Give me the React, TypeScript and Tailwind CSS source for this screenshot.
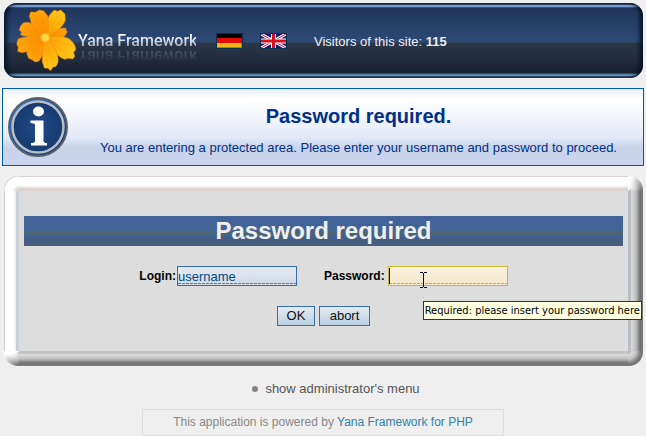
import React from 'react';

const Flower = () => (
  <svg viewBox="10 9 186 189" className="h-[63px] w-[62px] shrink-0" aria-hidden="true">
    <defs>
      <radialGradient id="petal" gradientUnits="userSpaceOnUse" cx="101" cy="95" r="98">
        <stop offset="0" stopColor="#f98c04" />
        <stop offset="0.55" stopColor="#fd9a06" />
        <stop offset="1" stopColor="#ffab12" />
      </radialGradient>
      <radialGradient id="petalLight" gradientUnits="userSpaceOnUse" cx="101" cy="95" r="98">
        <stop offset="0" stopColor="#fc9b08" />
        <stop offset="0.6" stopColor="#feb60c" />
        <stop offset="1" stopColor="#ffc61c" />
      </radialGradient>
    </defs>
    <g stroke="#ea8a04" strokeWidth="1.5" strokeLinejoin="round">
      <path fill="url(#petal)" d="M101 95C115 80 132 66 150 67L162 66L163 73L167 77L159 90C150 100 128 104 101 95Z" />
      <path fill="url(#petalLight)" d="M101 95C100 65 105 36 118 22L128 12L137 16L147 12L153 18L160 24L161 42C158 56 140 76 101 95Z" />
      <path fill="url(#petalLight)" d="M101 95C125 88 160 90 174 100C186 110 193 122 192 132L186 138L189 152L183 159L170 157L160 160C140 154 120 132 101 95Z" />
      <path fill="url(#petal)" d="M101 95C76 98 42 93 27 86L30 78L23 73L26 61L35 51L48 49C70 54 91 73 101 95Z" />
      <path fill="url(#petal)" d="M101 95C82 116 66 136 44 137L31 140L18 136L20 124L15 114L20 98C45 90 76 90 101 95Z" />
      <path fill="url(#petal)" d="M101 95C102 122 94 150 81 166L70 168L61 161L51 157L45 142C48 126 72 106 101 95Z" />
      <path fill="url(#petalLight)" d="M101 95C124 111 143 144 139 170L132 182L124 183L117 194L109 187L98 186L92 167C91 138 94 117 101 95Z" />
      <path fill="url(#petal)" d="M101 95C78 82 58 61 57 43L53 31L57 18L72 19L83 12L96 15L108 29C114 52 110 77 101 95Z" />
    </g>
    <path
      fill="none"
      stroke="#ee8505"
      strokeOpacity="0.35"
      strokeWidth="2"
      d="M96 83L70 30M101 82L90 26M107 85L138 28M110 87L150 40M90 88L36 66M88 93L32 112M90 102L60 150M98 107L108 176M104 107L125 172M112 103L170 145M114 98L178 120"
    />
    <circle cx="101" cy="95" r="15" fill="#fcb31c" />
    <circle cx="101" cy="95" r="10" fill="#ffd645" stroke="#ffcb3c" strokeWidth="3" strokeDasharray="3 2" />
  </svg>
);

const InfoIcon = () => (
  <svg viewBox="0 0 60 60" className="size-[60px] shrink-0" role="img" aria-label="Information">
    <defs>
      <linearGradient id="infoRing" x1="0" y1="0" x2="1" y2="1">
        <stop offset="0" stopColor="#2f7ee0" />
        <stop offset="1" stopColor="#0e2c5c" />
      </linearGradient>
      <radialGradient id="infoFill">
        <stop offset="0" stopColor="#204a86" />
        <stop offset="1" stopColor="#173a70" />
      </radialGradient>
    </defs>
    <circle cx="30" cy="30" r="29" fill="url(#infoRing)" stroke="#5b5f66" strokeWidth="2" />
    <circle cx="30" cy="30" r="25.500" fill="url(#infoFill)" stroke="#b9bdc4" strokeWidth="2.500" />
    <ellipse cx="30.500" cy="14.500" rx="5.500" ry="5" fill="#fff" />
    <path fill="#fff" d="M22.500 23.500H35.500V44Q35.500 46 39 46V48.500H23V46Q27 46 27 44V28Q27 26 22.500 26Z" />
  </svg>
);

const GermanFlag = () => (
  <svg viewBox="0 0 27 16" className="h-4 w-[27px]" aria-hidden="true">
    <rect width="27" height="16" fill="#0a3150" />
    <rect x="1" y="1" width="25" height="4" fill="#000" />
    <rect x="1" y="5" width="25" height="5" fill="#e00b05" />
    <rect x="1" y="10" width="25" height="5" fill="#efb51a" />
    <path d="M25.500 1V14.500H1" fill="none" stroke="#5a2b00" strokeOpacity="0.4" />
  </svg>
);

const BritishFlag = () => (
  <svg viewBox="0 0 27 16" className="h-4 w-[27px]" aria-hidden="true">
    <rect width="27" height="16" fill="#0a3150" />
    <svg x="1" y="1" width="25" height="14" viewBox="0 0 25 14">
      <rect width="25" height="14" fill="#101c80" />
      <path d="M0 0L25 14M25 0L0 14" stroke="#fff" strokeWidth="3" />
      <path d="M0 0L25 14M25 0L0 14" stroke="#d8101c" strokeWidth="1" />
      <path d="M12.500 0V14M0 7H25" stroke="#fff" strokeWidth="5" />
      <path d="M12.500 0V14M0 7H25" stroke="#d8101c" strokeWidth="3" />
    </svg>
  </svg>
);

const IBeam = () => (
  <svg viewBox="0 0 7 16" className="absolute left-8 top-[6px] h-4 w-[7px]" aria-hidden="true">
    <path d="M0 .5H3M4 .5H7M3.500 1V15M0 15.500H3M4 15.500H7" stroke="#101020" fill="none" />
  </svg>
);

const buttonClass =
  'h-5 border border-[#3a6ea5] bg-linear-to-b from-[#e6ebf1] to-[#b9cfe2] text-[13px] leading-[18px] text-[#111]';

const App = () => {
  return (
    <main className="min-h-screen overflow-hidden bg-[#efefef] pt-[3px] font-['Liberation_Sans',Arial,sans-serif] text-[13px]">
      {/* Top bar */}
      <header className="ml-1 mr-[3px] flex h-[75px] items-center rounded-[13px] bg-[linear-gradient(#27364f_0_1px,#3d5478_1px_2px,#7ca2dc_2px_4px,#34517f_4px_5px,#20355a_5px,#2d4a76_39px,#2b3748_40px,#182131_70px,#334a60_70px_71px,#5b87ad_71px_72px,#76a5dc_72px_73px,#3a5471_73px)] pl-[11px] shadow-[inset_4px_0_4px_-1px_#08152d,inset_-4px_0_4px_-1px_#050f22]">
        <Flower />
        <a
          href="#home"
          className="ml-px w-[118px] whitespace-nowrap bg-linear-to-b from-white from-30% via-[#d5d8df] to-[#90959f] to-85% bg-clip-text font-[Roboto,sans-serif] text-base font-medium leading-6 text-transparent [-webkit-box-reflect:below_-9px_linear-gradient(transparent_30%,#0007)]"
        >
          Yana Framework
        </a>
        <nav className="ml-5 flex gap-[17px]">
          <a href="#de" aria-label="Deutsch"><GermanFlag /></a>
          <a href="#en" aria-label="English"><BritishFlag /></a>
        </nav>
        <p className="ml-[27px] pt-[2px] text-[#efefef]">
          Visitors of this site: <b>115</b>
        </p>
      </header>

      {/* Message */}
      <section className="ml-[2px] mr-[2px] mt-[10px] flex h-[78px] items-center border border-[#0058a8] bg-[linear-gradient(#e9eefb,#fff_10px,#f5f7fd_25px,#e4e9f6_48px,#c9d4ec_58px,#c9d4ec)] pl-[5px] text-[#003087]">
        <InfoIcon />
        <div className="flex-1 pl-[6px] pt-[6px] text-center">
          <h1 className="text-xl font-bold leading-6">Password required.</h1>
          <p className="mt-3 leading-4">
            You are entering a protected area. Please enter your username and password to proceed.
          </p>
        </div>
      </section>

      {/* Login form in a bevelled frame */}
      <section className="ml-1 mr-[3px] mt-[10px] rounded-[14px] p-[15px] [background:radial-gradient(circle_at_0_0,#b7bfc6_3px,#dcdcdc_4px,#c4c4c4_8px,#767676_13px,#808080)_right_bottom/15px_15px_no-repeat,conic-gradient(from_0deg_at_0_100%,#fff_15deg,transparent_85deg)_right_top/15px_15px_no-repeat,radial-gradient(circle_at_0_100%,#b7bfc6_3px,#dcdcdc_4px,#c4c4c4_8px,#767676_13px,#808080)_right_top/15px_15px_no-repeat,conic-gradient(from_180deg_at_100%_0,transparent_5deg,#fff_75deg)_left_bottom/15px_15px_no-repeat,radial-gradient(circle_at_100%_0,#c4c4c4_3px,#dcdcdc_4px,#c4c4c4_8px,#767676_13px,#808080)_left_bottom/15px_15px_no-repeat,radial-gradient(circle_at_100%_100%,#ddd_3px,#fff_6px_14px,#d8d0d2_15px)_left_top/15px_15px_no-repeat,linear-gradient(#ddd0d0_1px,#fff_1px_9px,#e2e2e2_12px,#ddd3d3_12px)_top/100%_15px_no-repeat,linear-gradient(#c4c4c4_3px,#dfdfdf_3px,#bdbdbd_8px,#707070_12px,#808080)_bottom/100%_15px_no-repeat,linear-gradient(90deg,#c8d0d8_1px,#fff_1px_9px,#eee_12px,#c9d0d6_12px)_left/15px_100%_no-repeat,linear-gradient(90deg,#b7bfc6_3px,#dcdcdc_3px,#bdbdbd_8px,#707070_12px,#777)_right/15px_100%_no-repeat]">
        <form className="bg-[#dddddd] px-[5px] py-[25px]" onSubmit={(e) => e.preventDefault()}>
          <h2 className="h-[30px] bg-[linear-gradient(#426397_13px,#3f659f_13px_14px,#456392_14px_16px,#4b6576_16px_17px,#3d639d_17px_18px,#4b6576_18px_19px,#455f86_19px_20px,#3d639d_20px_21px,#465c80_21px)] text-center text-2xl font-bold leading-[30px] text-[#efefef]">
            Password required
          </h2>
          <div className="mt-5 flex items-center justify-center">
            <label htmlFor="login" className="text-xs font-bold text-black">Login:</label>
            <input
              id="login"
              type="text"
              defaultValue="username"
              className="ml-px h-5 w-[120px] border border-[#3a6ea5] text-[13px] leading-4 text-[#004b87] outline-none [background:repeating-linear-gradient(90deg,#4c84b5_0_3px,transparent_3px_4px)_0_calc(100%_-_1px)/100%_1px_no-repeat,linear-gradient(#e5eaf2,#cfdae6)]"
            />
            <label htmlFor="password" className="ml-[27px] text-xs font-bold text-black">Password:</label>
            <div className="relative ml-[3px]">
              <input
                id="password"
                type="password"
                className="block h-5 w-[120px] border border-[#cdb62c] text-[13px] outline-none [background:repeating-linear-gradient(90deg,#dfa52c_0_3px,transparent_3px_4px)_0_calc(100%_-_1px)/100%_1px_no-repeat,linear-gradient(#f8f1df,#f5e8cb)]"
              />
              <span className="absolute left-px top-[2px] h-4 w-px bg-black" />
              <IBeam />
              <div
                role="tooltip"
                className="absolute left-[35px] top-[35px] z-10 whitespace-nowrap border border-[#333] bg-[#ffffe1] px-px font-['DejaVu_Sans_Condensed','Open_Sans',sans-serif] text-[11px] leading-[17px] text-black"
              >
                Required: please insert your password here
              </div>
            </div>
          </div>
          <div className="mt-5 flex justify-center gap-1">
            <button type="submit" className={`${buttonClass} w-[38px]`}>OK</button>
            <button type="button" className={`${buttonClass} w-[51px]`}>abort</button>
          </div>
        </form>
      </section>

      {/* Footer */}
      <footer className="mt-[15px] flex flex-col items-center">
        <a href="#admin" className="flex items-center gap-[7px] pl-[26px] leading-4 text-[#555]">
          <span className="size-[6px] rounded-full bg-[#848484]" />
          show administrator&apos;s menu
        </a>
        <p className="mt-3 h-[27px] w-[362px] border border-[#dddddd] text-center text-xs leading-[25px] text-[#888]">
          This application is powered by <a href="#yana" className="text-[#2f82a8]">Yana Framework for PHP</a>
        </p>
      </footer>
    </main>
  );
};

export default App;
